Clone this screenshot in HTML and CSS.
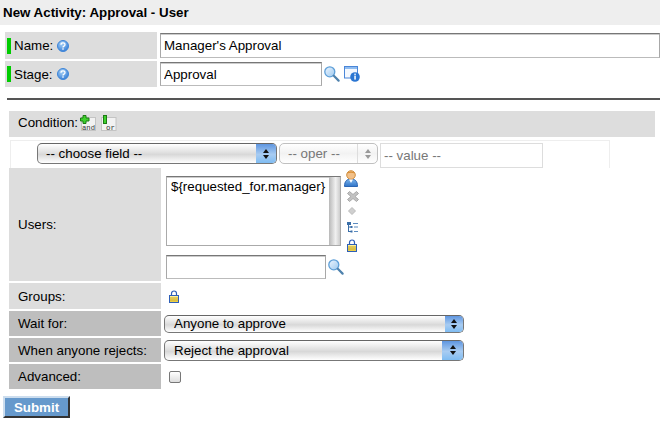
FILE: index.html
```html
<!DOCTYPE html>
<html lang="en">
<head>
<meta charset="utf-8">
<title>New Activity</title>
<link rel="stylesheet" href="styles.css">
</head>
<body>
<svg class="defs" width="0" height="0">
  <defs>
    <linearGradient id="lens" x1="0" y1="0" x2="1" y2="1"><stop offset="0" stop-color="#eef6ff"/><stop offset="1" stop-color="#9cc8ee"/></linearGradient>
    <radialGradient id="help" cx=".4" cy=".3" r=".8"><stop offset="0" stop-color="#a8d2f8"/><stop offset="1" stop-color="#2b76d2"/></radialGradient>
    <linearGradient id="gold" x1="0" y1="0" x2="0" y2="1"><stop offset="0" stop-color="#fff6a8"/><stop offset="1" stop-color="#e8c838"/></linearGradient>
    <linearGradient id="shirt" x1="0" y1="0" x2="0" y2="1"><stop offset="0" stop-color="#7fb6ec"/><stop offset="1" stop-color="#2f74c8"/></linearGradient>
    <symbol id="i-help" viewBox="0 0 12 12"><circle cx="6" cy="6" r="5.500" fill="url(#help)" stroke="#3f86d8"/><path d="M4 4.700c0-2.400 4-2.400 4 0 0 1.500-2 1.300-2 2.700" fill="none" stroke="#fff" stroke-width="1.300"/><rect x="5.300" y="8.300" width="1.400" height="1.400" fill="#fff"/></symbol>
    <symbol id="i-search" viewBox="0 0 16 16"><circle cx="5.800" cy="5.800" r="5" fill="url(#lens)" stroke="#5e9fd8" stroke-width="1.300"/><path d="M9.800 9.800l4.800 4.800" stroke="#4f82ad" stroke-width="2.200" stroke-linecap="round"/></symbol>
    <symbol id="i-lock" viewBox="0 0 10 13"><path d="M2.500 6V3.500a2.500 2.500 0 0 1 5 0V6" fill="none" stroke="#2e5fb8" stroke-width="1.200"/><rect x=".5" y="5.500" width="9" height="7" fill="url(#gold)" stroke="#2e5fb8"/><path d="M1 8h8M1 10h8" stroke="#c9a92c"/></symbol>
  </defs>
</svg>

<h1 class="title">New Activity: Approval - User</h1>

<div class="top-form">
  <div class="top-row top-row-name">
    <div class="top-label"><span class="req"></span><span>Name:</span><svg class="help"><use href="#i-help"/></svg></div>
    <div class="top-value"><input class="text name-input" type="text" value="Manager's Approval"></div>
  </div>
  <div class="top-row top-row-stage">
    <div class="top-label"><span class="req"></span><span>Stage:</span><svg class="help"><use href="#i-help"/></svg></div>
    <div class="top-value">
      <input class="text stage-input" type="text" value="Approval">
      <svg class="search stage-search"><use href="#i-search"/></svg>
      <svg class="info" viewBox="0 0 16 16">
        <rect x=".5" y=".5" width="13" height="11.500" fill="#f4f8fe" stroke="#4a86d8"/>
        <rect x="1" y="1" width="12" height="2" fill="#8fbcf0"/>
        <circle cx="11" cy="11" r="4.800" fill="#2b76d2"/>
        <rect x="10.300" y="9.600" width="1.500" height="4" fill="#fff"/><rect x="10.300" y="7.600" width="1.500" height="1.300" fill="#fff"/>
      </svg>
    </div>
  </div>
</div>

<hr class="rule">

<div class="cond-bar">
  <span>Condition:</span>
  <svg class="cond-icon cond-and" viewBox="0 0 16 16">
    <rect x="1.500" y="2.500" width="14" height="13" fill="#f2f2f2" stroke="#c4c4c4"/>
    <path d="M3 .5h3v2.500h3v3H6v2.500H3V6H.5V3H3z" fill="#3ed02c" stroke="#1d7a14"/>
    <text x="2" y="15" class="mini" textLength="13" lengthAdjust="spacingAndGlyphs">and</text>
  </svg>
  <svg class="cond-icon cond-or" viewBox="0 0 16 16">
    <rect x=".5" y="2.500" width="14.500" height="13" fill="#f2f2f2" stroke="#c4c4c4"/>
    <rect x="2.500" y=".5" width="3" height="8" fill="#3ed02c" stroke="#1d7a14"/>
    <text x="5" y="15" class="mini" textLength="9" lengthAdjust="spacingAndGlyphs">or</text>
  </svg>
</div>

<div class="filter">
  <div class="select select-blue field-select"><span>-- choose field --</span><span class="stepper"><i class="up"></i><i class="down"></i></span></div>
  <div class="select oper-select"><span>-- oper --</span><span class="stepper"><i class="up"></i><i class="down"></i></span></div>
  <input class="text value-input" type="text" value="-- value --">
</div>

<div class="rows">
  <div class="row row-users">
    <div class="label">Users:</div>
    <div class="users-value">
      <div class="users-top">
        <div class="listbox"><div class="listbox-text">${requested_for.manager}</div><div class="scroll"></div></div>
        <div class="tools">
          <svg class="tool-user" viewBox="0 0 14 17"><path d="M.5 16.500c0-5.500 2.500-7.500 6.500-7.500s6.500 2 6.500 7.500z" fill="url(#shirt)" stroke="#2c66b4"/><circle cx="7" cy="5" r="4.300" fill="#f2c088" stroke="#cf8f42"/><path d="M3 3.500C4 .8 10 .8 11 3.500 8 2.500 6 2.500 3 3.500z" fill="#d98f35"/><path d="M5 9.500l2 3.500 2-3.500z" fill="#fff"/></svg>
          <svg class="tool-x" viewBox="0 0 12 11"><path d="M2.500.5 6 3.500 9.500.5 11.500 2.500 8 5.500 11.500 8.500 9.500 10.500 6 7.500 2.500 10.500.5 8.500 4 5.500.5 2.500z" fill="#c2c2c2" stroke="#a8a8a8"/></svg>
          <svg class="tool-diamond" viewBox="0 0 8 8"><path d="M4 .5 7.500 4 4 7.500.5 4z" fill="#cfcfcf" stroke="#bbb"/></svg>
          <svg class="tool-tree" viewBox="0 0 11 11"><path d="M1.500 1v9M1.500 5h3M1.500 9.500h3" stroke="#3a6ea8" fill="none"/><path d="M0 0h4v3H0zM3.500 4h2v2h-2zM3.500 8.500h2v2h-2z" fill="#3a6ea8"/><path d="M6 1.500h5M7 5h4M7 9.500h4" stroke="#5c8cc0"/></svg>
          <svg class="tool-lock"><use href="#i-lock"/></svg>
        </div>
      </div>
      <div class="users-search">
        <input class="text users-input" type="text">
        <svg class="search"><use href="#i-search"/></svg>
      </div>
    </div>
  </div>
  <div class="row row-groups">
    <div class="label">Groups:</div>
    <div class="value"><svg class="group-lock"><use href="#i-lock"/></svg></div>
  </div>
  <div class="row row-wait">
    <div class="label label-dark">Wait for:</div>
    <div class="value"><div class="select select-blue wait-select"><span>Anyone to approve</span><span class="stepper"><i class="up"></i><i class="down"></i></span></div></div>
  </div>
  <div class="row row-rejects">
    <div class="label label-dark">When anyone rejects:</div>
    <div class="value"><div class="select select-blue reject-select"><span>Reject the approval</span><span class="stepper"><i class="up"></i><i class="down"></i></span></div></div>
  </div>
  <div class="row row-adv">
    <div class="label label-dark">Advanced:</div>
    <div class="value"><span class="check"></span></div>
  </div>
</div>

<button class="submit" type="button">Submit</button>
</body>
</html>
```

FILE: styles.css
```css
* { box-sizing: border-box; }
html, body { margin: 0; padding: 0; }
body {
  width: 660px;
  height: 424px;
  overflow: hidden;
  background: #fff;
  color: #000;
  font-family: "Liberation Sans", Arial, sans-serif;
  font-size: 13.33px;
}
.defs { position: absolute; }
.title {
  margin: 0;
  height: 25px;
  padding: 5px 3px 0;
  background: #eee;
  font-size: 13.33px;
  line-height: 16px;
  font-weight: bold;
}
.top-form { padding: 7px 0 0 5px; }
.top-row { display: flex; }
.top-row-name { height: 27px; margin-bottom: 2px; }
.top-row-stage { height: 26px; }
.top-label {
  width: 152px;
  background: #ddd;
  display: flex;
  align-items: center;
  padding-left: 2px;
  gap: 3px;
}
.req { width: 4px; height: 16px; background: #0c0; }
.help { width: 12px; height: 12px; margin-left: 1px; }
.top-value { flex: 1; padding-left: 3px; display: flex; align-items: center; min-width: 0; }
.text {
  font: 13.33px "Liberation Sans", Arial, sans-serif;
  border: 1px solid #bbb;
  border-top-color: #777;
  border-left-color: #a8a8a8;
  border-right-color: #a8a8a8;
  box-shadow: inset 0 1px 0 #ccc;
  padding: 0 3px;
  background: #fff;
  color: #000;
  outline: none;
}
.name-input { width: 500px; height: 25px; }
.stage-input { width: 162px; height: 24px; }
.search { width: 16px; height: 16px; flex: none; }
.stage-search { margin-left: 2px; }
.info { width: 16px; height: 16px; margin-left: 4px; }
.rule { margin: 11px 0 0 7px; height: 2px; border: 0; background: #555; }

.cond-bar {
  margin: 11px 5px 0 9px;
  height: 26px;
  background: #ddd;
  display: flex;
  align-items: center;
  padding: 0 0 3px 9px;
}
.cond-icon { width: 16px; height: 16px; }
.cond-and { margin-left: 2px; }
.cond-or { margin-left: 5px; }
.mini { font: 8px "Liberation Mono", monospace; fill: #333; }

.filter {
  margin: 3px 50px 0 10px;
  height: 28px;
  border: 1px solid #eee;
  border-bottom: 0;
  display: flex;
  align-items: flex-start;
  padding: 2px 0 0 26px;
}
.select {
  display: flex;
  justify-content: space-between;
  align-items: center;
  height: 21px;
  border: 1px solid #777;
  border-top-color: #666;
  border-radius: 5px;
  background: linear-gradient(#fff, #e0e0e0 45%, #d8d8d8 55%, #fff);
  padding-left: 8px;
  overflow: hidden;
}
.stepper {
  align-self: stretch;
  width: 20px;
  display: flex;
  flex-direction: column;
  align-items: center;
  justify-content: center;
  gap: 2px;
  background: linear-gradient(#5f96e0, #a8ccf2 55%, #7fbcf2);
}
.stepper i { display: block; width: 0; height: 0; border-left: 3px solid transparent; border-right: 3px solid transparent; }
.stepper .up { border-bottom: 4px solid #111; }
.stepper .down { border-top: 4px solid #111; }
.field-select { width: 240px; }
.oper-select {
  width: 99px;
  margin-left: 2px;
  color: #777;
  border-color: #c0c0c0;
  background: linear-gradient(#fff, #f2f2f2 50%, #fff);
}
.oper-select .stepper { background: none; border-left: 1px solid #ddd; }
.oper-select .up { border-bottom-color: #999; }
.oper-select .down { border-top-color: #999; }
.value-input {
  width: 163px;
  height: 25px;
  margin-left: 2px;
  color: #777;
  border: 1px solid #ddd;
  box-shadow: none;
}

.rows { margin-left: 9px; display: flex; flex-direction: column; gap: 2px; }
.row { display: flex; }
.label {
  width: 152px;
  background: #ddd;
  display: flex;
  align-items: center;
  padding-left: 9px;
}
.label-dark { background: #bebebe; }
.value { display: flex; align-items: center; padding-left: 3px; }
.row-users { height: 113px; }
.row-groups { height: 26px; }
.row-wait { height: 25px; }
.row-rejects { height: 24px; }
.row-adv { height: 25px; }
.users-value { padding: 8px 0 0 5px; }
.users-top { display: flex; }
.listbox {
  width: 175px;
  height: 70px;
  border: 1px solid #aaa;
  border-top-color: #777;
  box-shadow: inset 0 1px 0 #ccc;
  display: flex;
  justify-content: space-between;
}
.listbox-text { padding: 2px 0 0 4px; white-space: nowrap; }
.scroll { width: 11px; background: linear-gradient(90deg, #b8b8b8, #f0f0f0 60%, #ccc); }
.tools {
  display: flex;
  flex-direction: column;
  align-items: flex-start;
  margin-top: -6px;
  margin-left: 3px;
}
.tool-user { width: 14px; height: 17px; }
.tool-x { width: 12px; height: 11px; margin: 4px 0 0 3px; }
.tool-diamond { width: 8px; height: 8px; margin: 5px 0 0 4px; }
.tool-tree { width: 11px; height: 11px; margin: 7px 0 0 3px; }
.tool-lock { width: 10px; height: 13px; margin: 6px 0 0 3px; }
.users-search { display: flex; align-items: center; margin-top: 3px; gap: 2px; }
.users-input { width: 160px; height: 24px; }
.group-lock { width: 10px; height: 13px; margin-left: 5px; }
.wait-select { width: 300px; height: 18px; padding-left: 9px; }
.reject-select { width: 300px; height: 21px; padding-left: 9px; }
.wait-select .stepper { width: 18px; }
.reject-select .stepper { width: 21px; }
.check {
  display: block;
  width: 12px;
  height: 12px;
  margin-left: 5px;
  border: 1px solid #777;
  border-radius: 2px;
  background: linear-gradient(#fff, #ddd);
}
.submit {
  display: block;
  margin: 7px 0 0 3px;
  width: 67px;
  height: 22px;
  padding: 0;
  font: bold 13.33px "Liberation Sans", Arial, sans-serif;
  color: #fff;
  background: #6699cc;
  border: 2px solid;
  border-color: #cde #333 #333 #cde;
}
```
